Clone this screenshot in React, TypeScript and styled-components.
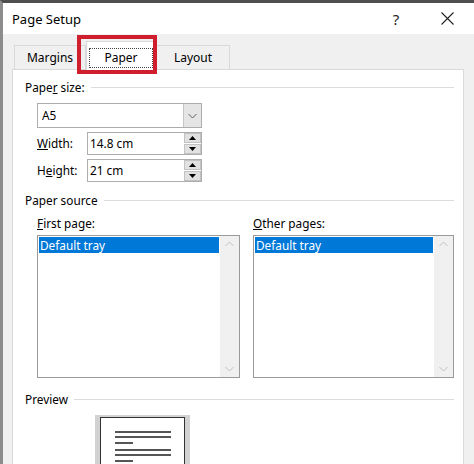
import styled, { createGlobalStyle } from 'styled-components'

const GlobalStyle = createGlobalStyle`
  body {
    margin: 0;
    background: #ffffff;
  }
`

const Window = styled.div`
  position: relative;
  width: 474px;
  height: 464px;
  overflow: hidden;
  box-sizing: border-box;
  border-top: 3px solid #4f4f4f;
  border-left: 3px solid #8c8c8c;
  background: #f0f0f0;
  display: flex;
  flex-direction: column;
  font-family: 'Noto Sans', 'DejaVu Sans', sans-serif;
  font-size: 11.8px;
  color: #000;
`

const TitleBar = styled.div`
  height: 31px;
  flex-shrink: 0;
  background: #fff;
  display: flex;
  align-items: center;
  padding: 0 4px 0 9px;
`

const Title = styled.div`
  flex: 1;
  font-size: 13px;
`

const CaptionButton = styled.div<{ $gap?: number }>`
  width: 46px;
  height: 31px;
  margin-right: ${(p) => p.$gap ?? 0}px;
  display: flex;
  align-items: center;
  justify-content: center;
  font-size: 15px;
  color: #222;
`

const Body = styled.div`
  flex: 1;
  display: flex;
  flex-direction: column;
  padding: 0 10px 0 9px;
  min-height: 0;
`

const TabStrip = styled.div`
  height: 35px;
  flex-shrink: 0;
  display: flex;
  align-items: flex-end;
  padding-left: 2px;
`

const Tab = styled.div<{ $active?: boolean; $width: number }>`
  position: relative;
  z-index: ${(p) => (p.$active ? 2 : 1)};
  box-sizing: border-box;
  width: ${(p) => p.$width}px;
  height: ${(p) => (p.$active ? 29 : 24)}px;
  margin-bottom: ${(p) => (p.$active ? -1 : 0)}px;
  background: ${(p) => (p.$active ? '#fff' : '#f0f0f0')};
  border: 1px solid #d9d9d9;
  border-bottom: none;
  display: flex;
  align-items: center;
  justify-content: center;
  font-size: 12px;
`

const FocusBox = styled.span`
  display: flex;
  align-items: center;
  justify-content: center;
  width: 64px;
  height: 20px;
  margin-top: 3px;
  border: 1px dotted #444;
  box-sizing: border-box;
`

const Highlight = styled.div`
  position: absolute;
  left: 74px;
  top: 32px;
  width: 80px;
  height: 39px;
  box-sizing: border-box;
  border: 4px solid #cf1f2e;
  z-index: 5;
  pointer-events: none;
`

const Panel = styled.div`
  position: relative;
  z-index: 0;
  flex: 1;
  background: #fff;
  border: 1px solid #d9d9d9;
  border-bottom: none;
  padding: 10px 9px 0 12px;
  display: flex;
  flex-direction: column;
  line-height: 15px;
`

const Legend = styled.div<{ $top?: number }>`
  display: flex;
  align-items: center;
  gap: 6px;
  height: 15px;
  margin-top: ${(p) => p.$top ?? 0}px;
`

const Rule = styled.div`
  flex: 1;
  height: 1px;
  background: #dcdcdc;
`

const GroupBody = styled.div<{ $top: number }>`
  padding-left: 12px;
  margin-top: ${(p) => p.$top}px;
  display: flex;
  flex-direction: column;
`

const Combo = styled.div`
  width: 165px;
  height: 25px;
  box-sizing: border-box;
  border: 1px solid #adadad;
  display: flex;
  align-items: stretch;
`

const ComboText = styled.div`
  flex: 1;
  display: flex;
  align-items: center;
  padding-left: 4px;
`

const DropButton = styled.div`
  width: 17px;
  background: #e5e5e5;
  border-left: 1px solid #c6c6c6;
  display: flex;
  align-items: center;
  justify-content: center;
`

const FieldRow = styled.div`
  display: flex;
  align-items: center;
  margin-top: 4px;
`

const FieldLabel = styled.div`
  width: 50px;
`

const NumberBox = styled.div`
  width: 115px;
  height: 23px;
  box-sizing: border-box;
  border: 1px solid #adadad;
  display: flex;
  align-items: stretch;
`

const NumberText = styled.div`
  flex: 1;
  display: flex;
  align-items: center;
  padding-left: 2px;
`

const Spinner = styled.div`
  width: 17px;
  padding: 0 0 0 1px;
  display: flex;
  flex-direction: column;
  gap: 1px;
`

const SpinButton = styled.div`
  flex: 1;
  background: #e1e1e1;
  border: 1px solid #c2c2c2;
  display: flex;
  align-items: center;
  justify-content: center;
`

const Columns = styled.div`
  display: grid;
  grid-template-columns: 203px 201px;
  column-gap: 13px;
`

const Column = styled.div`
  display: flex;
  flex-direction: column;
`

const ListBox = styled.div`
  margin-top: 4px;
  height: 143px;
  box-sizing: border-box;
  border: 1px solid #9a9a9a;
  display: flex;
`

const ListItems = styled.div`
  flex: 1;
  padding: 1px 1px 0 1px;
`

const ListItem = styled.div<{ $selected?: boolean }>`
  height: 16px;
  display: flex;
  align-items: center;
  padding-left: 1px;
  background: ${(p) => (p.$selected ? '#0078d7' : 'transparent')};
  color: ${(p) => (p.$selected ? '#fff' : '#000')};
`

const ScrollTrack = styled.div`
  width: 19px;
  background: #f0f0f0;
  display: flex;
  flex-direction: column;
  justify-content: space-between;
  align-items: center;
  padding: 5px 0;
`

const PreviewFrame = styled.div`
  margin: 8px 0 0 58px;
  width: 95px;
  height: 60px;
  box-sizing: border-box;
  background: #d2d2d2;
  padding: 2px 5px 0;
`

const Page = styled.div`
  height: 100%;
  box-sizing: border-box;
  background: #fff;
  border: 1px solid #333;
  border-bottom: none;
  padding: 13px 0 0 14px;
  display: flex;
  flex-direction: column;
`

const TextLine = styled.div<{ $short?: boolean; $gap: number }>`
  width: ${(p) => (p.$short ? 18 : 56)}px;
  height: 2px;
  background: #555;
  margin-top: ${(p) => p.$gap}px;
`

function Chevron({ up = false, color = '#777' }: { up?: boolean; color?: string }) {
  return (
    <svg width="9" height="6" viewBox="0 0 9 6">
      <polyline
        points={up ? '0.5,5 4.5,1 8.5,5' : '0.5,1 4.5,5 8.5,1'}
        fill="none"
        stroke={color}
        strokeWidth="1"
      />
    </svg>
  )
}

function Triangle({ up = false }: { up?: boolean }) {
  return (
    <svg width="7" height="4" viewBox="0 0 7 4">
      <polygon points={up ? '0,4 3.5,0 7,4' : '0,0 7,0 3.5,4'} fill="#000" />
    </svg>
  )
}

function CloseGlyph() {
  return (
    <svg width="13" height="13" viewBox="0 0 13 13">
      <path d="M0.5 0.5 L12.5 12.5 M12.5 0.5 L0.5 12.5" stroke="#222" strokeWidth="1.1" />
    </svg>
  )
}

function NumberField({ label, value }: { label: React.ReactNode; value: string }) {
  return (
    <FieldRow>
      <FieldLabel>{label}</FieldLabel>
      <NumberBox>
        <NumberText>{value}</NumberText>
        <Spinner>
          <SpinButton>
            <Triangle up />
          </SpinButton>
          <SpinButton>
            <Triangle />
          </SpinButton>
        </Spinner>
      </NumberBox>
    </FieldRow>
  )
}

function TrayList({ label }: { label: React.ReactNode }) {
  return (
    <Column>
      <div>{label}</div>
      <ListBox>
        <ListItems>
          <ListItem $selected>Default tray</ListItem>
        </ListItems>
        <ScrollTrack>
          <Chevron up color="#c0c0c0" />
          <Chevron color="#c0c0c0" />
        </ScrollTrack>
      </ListBox>
    </Column>
  )
}

export default function App() {
  return (
    <>
      <GlobalStyle />
      <Window>
        <TitleBar>
          <Title>Page Setup</Title>
          <CaptionButton $gap={5}>?</CaptionButton>
          <CaptionButton>
            <CloseGlyph />
          </CaptionButton>
        </TitleBar>
        <Body>
          <TabStrip>
            <Tab $width={72}>Margins</Tab>
            <Tab $width={70} $active>
              <FocusBox>Paper</FocusBox>
            </Tab>
            <Tab $width={74}>Layout</Tab>
          </TabStrip>
          <Panel>
            <Legend>
              <span>
                Pape<u>r</u> size:
              </span>
              <Rule />
            </Legend>
            <GroupBody $top={8}>
              <Combo>
                <ComboText>A5</ComboText>
                <DropButton>
                  <Chevron color="#606060" />
                </DropButton>
              </Combo>
              <NumberField
                label={
                  <>
                    <u>W</u>idth:
                  </>
                }
                value="14.8 cm"
              />
              <NumberField
                label={
                  <>
                    H<u>e</u>ight:
                  </>
                }
                value="21 cm"
              />
            </GroupBody>

            <Legend $top={11}>
              <span>Paper source</span>
              <Rule />
            </Legend>
            <GroupBody $top={8}>
              <Columns>
                <TrayList
                  label={
                    <>
                      <u>F</u>irst page:
                    </>
                  }
                />
                <TrayList
                  label={
                    <>
                      <u>O</u>ther pages:
                    </>
                  }
                />
              </Columns>
            </GroupBody>

            <Legend $top={14}>
              <span>Preview</span>
              <Rule />
            </Legend>
            <GroupBody $top={0}>
              <PreviewFrame>
                <Page>
                  <TextLine $gap={0} />
                  <TextLine $gap={3} />
                  <TextLine $gap={4} $short />
                  <TextLine $gap={5} />
                  <TextLine $gap={3} />
                  <TextLine $gap={4} $short />
                </Page>
              </PreviewFrame>
            </GroupBody>
          </Panel>
        </Body>
        <Highlight />
      </Window>
    </>
  )
}
